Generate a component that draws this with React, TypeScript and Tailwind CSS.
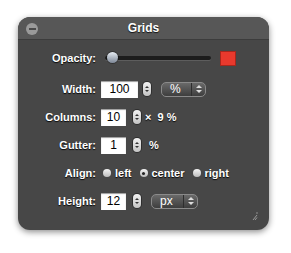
import React from 'react';

const font = { fontFamily: '"Liberation Sans", Arial, sans-serif' };

const Label = ({ text }: { text: string }) => (
  <div className="w-[78px] shrink-0 text-right text-[11px] font-bold text-white [text-shadow:0_1px_1px_rgba(0,0,0,0.9)]">
    {text}
  </div>
);

const Stepper = () => (
  <div className="flex h-[14px] w-[8px] flex-col items-center justify-center gap-[2px] rounded-[4px] bg-gradient-to-b from-[#f2f2f2] to-[#c4c4c4] shadow-[0_0_0_1px_rgba(0,0,0,0.35)]">
    <div className="h-0 w-0 border-x-[2px] border-b-[2px] border-x-transparent border-b-[#333]" />
    <div className="h-0 w-0 border-x-[2px] border-t-[2px] border-x-transparent border-t-[#333]" />
  </div>
);

const NumInput = ({ value, w }: { value: string; w: string }) => (
  <div
    className={`flex h-[17px] ${w} items-center justify-center bg-white text-[12px] text-black shadow-[inset_0_1px_1px_rgba(0,0,0,0.4)]`}
  >
    {value}
  </div>
);

const Select = ({ value, w }: { value: string; w: string }) => (
  <div
    className={`flex h-[15px] ${w} items-center rounded-[5px] border border-[#8a8a8a] bg-gradient-to-b from-[#6a6a6a] to-[#3e3e3e] text-[12px] text-white`}
  >
    <div className="flex-1 pl-[8px]">{value}</div>
    <div className="flex h-full w-[14px] flex-col items-center justify-center gap-[2px] border-l border-[#2e2e2e]">
      <div className="h-0 w-0 border-x-[3px] border-b-[3px] border-x-transparent border-b-[#ddd]" />
      <div className="h-0 w-0 border-x-[3px] border-t-[3px] border-x-transparent border-t-[#ddd]" />
    </div>
  </div>
);

const Radio = ({ checked }: { checked?: boolean }) => (
  <div className="flex h-[8px] w-[8px] items-center justify-center rounded-full bg-gradient-to-b from-[#f4f4f4] to-[#bcbcbc]">
    {checked && <div className="h-[3px] w-[3px] rounded-full bg-[#222]" />}
  </div>
);

const txt = 'text-[11px] font-bold text-white [text-shadow:0_1px_1px_rgba(0,0,0,0.9)]';

export default function App() {
  return (
    <div className="h-[253px] w-[291px] bg-white pl-[18px] pt-[17px]" style={font}>
      <div className="flex h-[213px] w-[251px] flex-col overflow-hidden rounded-[12px] bg-[#474747] shadow-[0_2px_6px_rgba(0,0,0,0.45)]">
        <div className="relative flex h-[23px] shrink-0 items-center justify-center border-b border-[#3c3c3c] bg-[#575757]">
          <div className="absolute left-[8px] top-[6px] flex h-[12px] w-[12px] items-center justify-center rounded-full bg-[#9a9a9a]">
            <div className="h-[2px] w-[7px] bg-[#4a4a4a]" />
          </div>
          <div className="text-[12px] font-bold text-white [text-shadow:0_1px_1px_rgba(0,0,0,0.8)]">Grids</div>
        </div>

        <div className="relative flex flex-1 flex-col">
          <div className="mt-[4px] flex h-[28px] items-center">
            <Label text="Opacity:" />
            <div className="ml-[9px] flex items-center">
              <div className="relative h-[4px] w-[106px] rounded-full bg-[#1c1c1c] shadow-[0_1px_0_rgba(255,255,255,0.12)]">
                <div className="absolute left-[2px] top-[-4px] h-[11px] w-[11px] rounded-full bg-gradient-to-b from-[#e8eef4] to-[#7d8796] shadow-[0_0_0_1px_rgba(0,0,0,0.3)]" />
              </div>
              <div className="ml-[9px] h-[15px] w-[16px] border border-[#a8261c] bg-[#e8392d]" />
            </div>
          </div>

          <div className="mt-[3px] flex h-[28px] items-center">
            <Label text="Width:" />
            <div className="ml-[5px] flex items-center">
              <NumInput value="100" w="w-[37px]" />
              <div className="ml-[5px]"><Stepper /></div>
              <div className="ml-[10px]"><Select value="%" w="w-[45px]" /></div>
            </div>
          </div>

          <div className="flex h-[28px] items-center">
            <Label text="Columns:" />
            <div className="ml-[5px] flex items-center">
              <NumInput value="10" w="w-[25px]" />
              <div className="ml-[7px]"><Stepper /></div>
              <div className={`ml-[4px] ${txt}`}>× &nbsp;9 %</div>
            </div>
          </div>

          <div className="flex h-[28px] items-center">
            <Label text="Gutter:" />
            <div className="ml-[5px] flex items-center">
              <NumInput value="1" w="w-[25px]" />
              <div className="ml-[7px]"><Stepper /></div>
              <div className={`ml-[8px] ${txt}`}>%</div>
            </div>
          </div>

          <div className="flex h-[28px] items-center">
            <Label text="Align:" />
            <div className="ml-[7px] flex items-center">
              <Radio />
              <div className={`ml-[4px] ${txt}`}>left</div>
              <div className="ml-[8px]"><Radio checked /></div>
              <div className={`ml-[4px] ${txt}`}>center</div>
              <div className="ml-[8px]"><Radio /></div>
              <div className={`ml-[4px] ${txt}`}>right</div>
            </div>
          </div>

          <div className="flex h-[28px] items-center">
            <Label text="Height:" />
            <div className="ml-[5px] flex items-center">
              <NumInput value="12" w="w-[25px]" />
              <div className="ml-[7px]"><Stepper /></div>
              <div className="ml-[10px]"><Select value="px" w="w-[47px]" /></div>
            </div>
          </div>

          <svg className="absolute bottom-[9px] right-[11px]" width="6" height="9" viewBox="0 0 6 9">
            <line x1="1" y1="8" x2="5" y2="3" stroke="#9a9a9a" strokeWidth="1" />
            <line x1="3" y1="8" x2="5" y2="5.5" stroke="#9a9a9a" strokeWidth="1" />
            <circle cx="5" cy="1" r="0.8" fill="#9a9a9a" />
          </svg>
        </div>
      </div>
    </div>
  );
}
